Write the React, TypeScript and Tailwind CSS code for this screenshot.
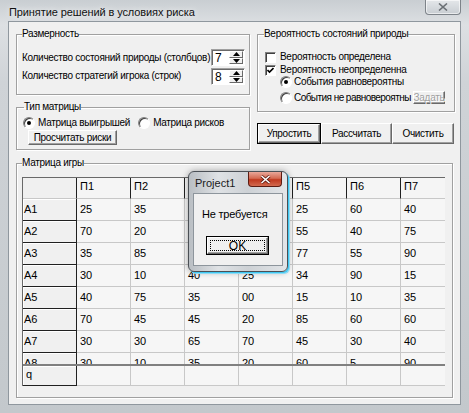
import React from "react";

const cols = ["П1", "П2", "П3", "П4", "П5", "П6", "П7"];
const rows: [string, string[]][] = [
  ["A1", ["25", "35", "50", "45", "25", "60", "40"]],
  ["A2", ["70", "20", "30", "55", "55", "40", "75"]],
  ["A3", ["35", "85", "20", "60", "77", "55", "90"]],
  ["A4", ["30", "10", "40", "25", "34", "90", "15"]],
  ["A5", ["40", "75", "35", "00", "15", "10", "35"]],
  ["A6", ["70", "45", "45", "20", "85", "60", "60"]],
  ["A7", ["30", "30", "65", "70", "45", "30", "40"]],
  ["A8", ["30", "10", "35", "20", "60", "5", "90"]],
];

const T = "text-[10px] leading-[12px] tracking-[-0.3px] whitespace-nowrap";

function Group({
  legend,
  className,
  legendClass,
  children,
}: {
  legend: string;
  className?: string;
  legendClass?: string;
  children: React.ReactNode;
}) {
  return (
    <fieldset
      className={`border border-[#a0a0a0] shadow-[inset_1px_1px_0_#ffffff,1px_1px_0_#ffffff] ${className ?? ""}`}
    >
      <legend className={`px-0 ${T} text-black ${legendClass ?? "ml-[5px]"}`}>{legend}</legend>
      {children}
    </fieldset>
  );
}

function Radio({ checked }: { checked?: boolean }) {
  return (
    <span className="flex h-[12px] w-[12px] shrink-0 items-center justify-center rounded-full border border-t-[#808080] border-l-[#808080] border-r-white border-b-white bg-white shadow-[inset_1px_1px_0_#404040]">
      {checked && <span className="h-[4px] w-[4px] rounded-full bg-black" />}
    </span>
  );
}

function Check({ checked }: { checked?: boolean }) {
  return (
    <span className="flex h-[11px] w-[11px] shrink-0 items-center justify-center border border-t-[#808080] border-l-[#808080] border-r-white border-b-white bg-white shadow-[inset_1px_1px_0_#404040]">
      {checked && (
        <svg width="7" height="7" viewBox="0 0 7 7">
          <path d="M0.5 3 L2.5 5 L6.5 1" stroke="#000" strokeWidth="1.6" fill="none" />
        </svg>
      )}
    </span>
  );
}

function Spin({ value }: { value: string }) {
  return (
    <div className="flex h-[17px] w-[34px] border border-t-[#a0a0a0] border-l-[#a0a0a0] border-r-white border-b-white bg-white shadow-[inset_1px_1px_0_#696969]">
      <span className="flex-1 pl-[3px] pt-[1px] text-[12px] leading-[14px]">{value}</span>
      <div className="my-[1px] mr-[1px] flex w-[14px] flex-col">
        <div className="flex flex-1 items-center justify-center border border-t-white border-l-white border-r-[#696969] border-b-[#696969] bg-[#f0f0f0]">
          <svg width="7" height="4" viewBox="0 0 7 4">
            <path d="M3.5 0 L7 4 L0 4 Z" fill="#000" />
          </svg>
        </div>
        <div className="flex flex-1 items-center justify-center border border-t-white border-l-white border-r-[#696969] border-b-[#696969] bg-[#f0f0f0]">
          <svg width="7" height="4" viewBox="0 0 7 4">
            <path d="M0 0 L7 0 L3.5 4 Z" fill="#000" />
          </svg>
        </div>
      </div>
    </div>
  );
}

const btn = `flex items-center justify-center border border-t-white border-l-white border-r-[#696969] border-b-[#696969] bg-[#f0f0f0] shadow-[inset_-1px_-1px_0_#a0a0a0] ${T}`;

export default function App() {
  return (
    <div className="relative flex h-[413px] w-[469px] flex-col overflow-hidden bg-[linear-gradient(180deg,#c9ced2_0%,#dde0e3_6%,#cfd3d7_20%,#c3c8cc_100%)] font-['Liberation_Sans',Arial,sans-serif] text-black">
      {/* title bar */}
      <div className="flex h-[21px] shrink-0 items-start">
        <div className="pl-[9px] pt-[5px] text-[11px] leading-[14px] tracking-[-0.1px] text-[#111] [text-shadow:0_0_6px_#ffffff]">
          Принятие решений в условиях риска
        </div>
        <div className="ml-auto mr-[8px] flex h-[15px] w-[36px] items-center justify-center rounded-b-[4px] border border-t-0 border-[#7d8389] bg-[linear-gradient(180deg,#e4e7ea,#c8cdd2)] shadow-[inset_0_0_0_1px_rgba(255,255,255,0.6)]">
          <svg width="10" height="8" viewBox="0 0 10 8">
            <path d="M1 0.5 L9 7.5 M9 0.5 L1 7.5" stroke="#6a6f74" strokeWidth="1.6" />
          </svg>
        </div>
      </div>

      {/* client area */}
      <div className="mx-[8px] flex h-[384px] flex-col border border-[#8f979e] bg-[#f0f0f0] pl-[7px] pt-[6px]">
        <div className="flex gap-[7px]">
          {/* left column */}
          <div className="flex w-[234px] flex-col gap-[6px]">
            <Group legend="Размерность" className="h-[67px]">
              <div className="mt-[9px] flex items-center justify-between pl-[5px] pr-[4px]">
                <span className={T}>Количество состояний природы (столбцов)</span>
                <Spin value="7" />
              </div>
              <div className="mt-[2px] flex items-center justify-between pl-[5px] pr-[4px]">
                <span className={`${T} -mt-[2px]`}>Количество стратегий игрока (строк)</span>
                <Spin value="8" />
              </div>
            </Group>
            <Group legend="Тип матрицы" className="h-[49px]" legendClass="ml-[7px]">
              <div className={`mt-[4px] flex items-center pl-[6px] ${T}`}>
                <Radio checked />
                <span className="ml-[3px]">Матрица выигрышей</span>
                <span className="ml-[8px]">
                  <Radio />
                </span>
                <span className="ml-[3px]">Матрица рисков</span>
              </div>
              <div className="mt-[1px] pl-[11px]">
                <div className={`${btn} h-[15px] w-[89px]`}>Просчитать риски</div>
              </div>
            </Group>
          </div>

          {/* right column */}
          <div className="flex w-[198px] flex-col">
            <Group legend="Вероятность состояний природы" className="h-[84px]" legendClass="ml-[6px]">
              <div className={`mt-[11px] flex flex-col pl-[7px] ${T}`}>
                <div className="flex h-[12px] items-center">
                  <Check />
                  <span className="ml-[4px]">Вероятность определена</span>
                </div>
                <div className="mt-[1px] flex h-[12px] items-center">
                  <Check checked />
                  <span className="ml-[4px]">Вероятность неопределенна</span>
                </div>
                <div className="flex h-[12px] items-center pl-[15px]">
                  <Radio checked />
                  <span className="ml-[2px]">События равновероятны</span>
                </div>
                <div className="mt-[3px] flex h-[13px] items-center pl-[15px]">
                  <Radio />
                  <span className="ml-[2px] tracking-[-0.55px]">События не равновероятны</span>
                  <div className={`${btn} ml-auto mr-[9px] h-[13px] w-[32px] text-[#a0a0a0] [text-shadow:1px_1px_0_#ffffff]`}>
                    Задать
                  </div>
                </div>
              </div>
            </Group>
            <div className="mt-[11px] flex h-[21px]">
              <div className="flex w-[64px] border border-black">
                <div className={`${btn} flex-1`}>Упростить</div>
              </div>
              <div className={`${btn} w-[71px]`}>Рассчитать</div>
              <div className={`${btn} w-[62px]`}>Очистить</div>
            </div>
          </div>
        </div>

        {/* Матрица игры */}
        <Group legend="Матрица игры" className="mt-[7px] h-[241px] w-[437px]">
          <div className="mt-[8px] pl-[5px]">
            <div className="flex h-[209px] w-[423px] flex-col overflow-hidden border-t border-l border-[#696969] text-[11px] leading-[12px]">
              <div className="h-[187px] overflow-hidden">
                <div className="flex h-[21px]">
                  <div className="h-full w-[54px] shrink-0 border-r border-b border-r-[#202020] border-b-[#c8c8c8] bg-[#f0f0f0]" />
                  {cols.map((c) => (
                    <div
                      key={c}
                      className="h-full w-[54px] shrink-0 border-r border-b border-r-[#202020] border-b-[#c8c8c8] bg-[#f5f5f5] pl-[3px] pt-[2px]"
                    >
                      {c}
                    </div>
                  ))}
                </div>
                {rows.map(([name, vals]) => (
                  <div key={name} className="flex h-[22px]">
                    <div className="h-full w-[54px] shrink-0 border-r border-b border-r-[#202020] border-b-[#202020] bg-[#f0f0f0] pl-[1px] pt-[4px] shadow-[inset_1px_1px_0_#ffffff]">
                      {name}
                    </div>
                    {vals.map((v, i) => (
                      <div
                        key={i}
                        className="h-full w-[54px] shrink-0 border-r border-b border-[#c8c8c8] bg-[#f6f6f6] pl-[3px] pt-[4px]"
                      >
                        {v}
                      </div>
                    ))}
                  </div>
                ))}
              </div>
              <div className="flex h-[22px] border-t-2 border-[#808080]">
                <div className="h-full w-[54px] shrink-0 border-r border-b border-r-[#202020] border-b-[#202020] bg-[#f0f0f0] pl-[3px] pt-[2px] shadow-[inset_1px_1px_0_#ffffff]">
                  q
                </div>
                {cols.map((c) => (
                  <div key={c} className="h-full w-[54px] shrink-0 border-r border-b border-[#c8c8c8] bg-[#f6f6f6]" />
                ))}
              </div>
            </div>
          </div>
        </Group>
      </div>

      {/* dialog */}
      <div className="absolute left-[188px] top-[171px] flex h-[101px] w-[100px] flex-col rounded-[6px] border border-[#4a4f55] bg-[linear-gradient(90deg,#b9bec3_0%,#dfe2e5_30%,#cdd1d5_60%,#e2e5e8_100%)] shadow-[1px_1px_0_#3fc6f0,2px_2px_0_#8fdcf5,0_0_6px_rgba(0,0,0,0.35)]">
        <div className="flex h-[21px] shrink-0 items-start">
          <span className="pl-[6px] pt-[5px] text-[11px] leading-[13px] text-[#1a1a1a]">Project1</span>
          <div className="ml-auto mr-[5px] flex h-[15px] w-[34px] items-center justify-center rounded-b-[4px] border border-t-0 border-[#5c1c12] bg-[linear-gradient(180deg,#e9a89a_0%,#d46a52_45%,#c0391f_55%,#d26a4f_100%)]">
            <svg width="11" height="9" viewBox="0 0 11 9">
              <path d="M1.5 1 L9.5 8 M9.5 1 L1.5 8" stroke="#5a1a10" strokeWidth="3" />
              <path d="M1.5 1 L9.5 8 M9.5 1 L1.5 8" stroke="#ffffff" strokeWidth="1.6" />
            </svg>
          </div>
        </div>
        <div className="mx-[4px] flex h-[73px] flex-col border border-[#8d959c] bg-[#f0f0f0]">
          <div className="mt-[14px] pl-[8px] text-[11px] leading-[13px] tracking-[-0.2px]">Не требуется</div>
          <div className="mt-[15px] pl-[12px]">
            <div className="flex h-[19px] w-[63px] border border-black">
              <div className="flex flex-1 items-center justify-center border border-t-white border-l-white border-r-[#696969] border-b-[#696969] bg-[#f0f0f0] p-[2px] shadow-[inset_-1px_-1px_0_#a0a0a0]">
                <div className="flex h-full w-full items-center justify-center border border-dotted border-black text-[12px] leading-[12px]">
                  OK
                </div>
              </div>
            </div>
          </div>
        </div>
      </div>
    </div>
  );
}
